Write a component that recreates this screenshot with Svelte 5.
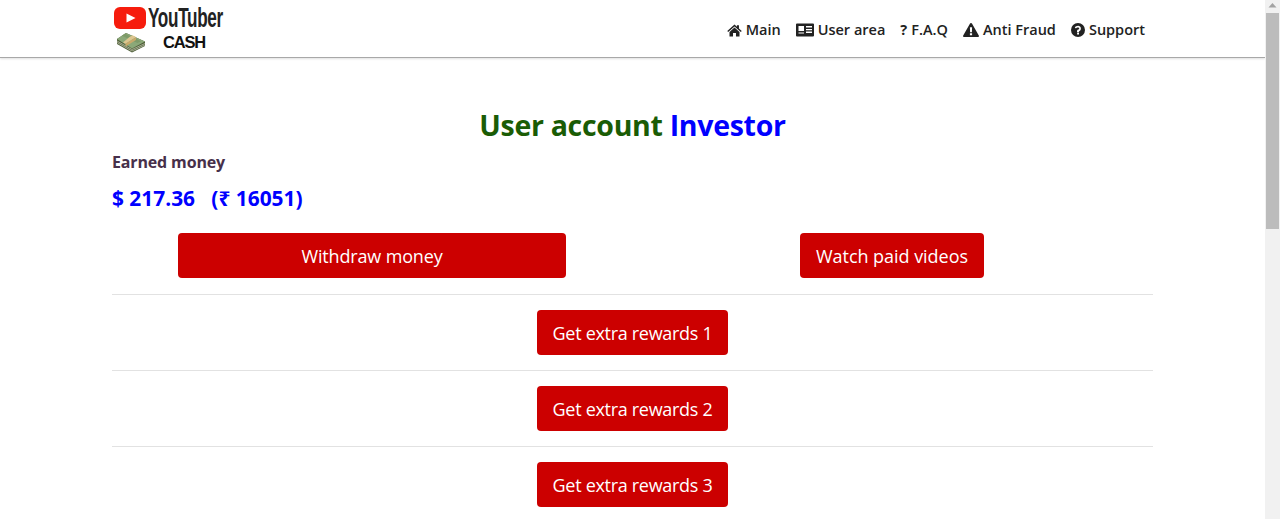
<script>
  const nav = [
    { label: 'Main', icon: 'home' },
    { label: 'User area', icon: 'card' },
    { label: 'F.A.Q', icon: 'q' },
    { label: 'Anti Fraud', icon: 'warn' },
    { label: 'Support', icon: 'help' }
  ];
  const extras = [1, 2, 3];
</script>

<div class="page">
  <header class="topbar">
    <div class="topinner">
      <div class="logo">
        <div class="logo-top">
          <svg class="yt" viewBox="0 0 32 22" width="32" height="22">
            <rect x="0" y="0" width="32" height="22" rx="6" fill="#f61c0d" />
            <path d="M12.5 6.5 L21.5 11 L12.5 15.5 Z" fill="#fff" />
          </svg>
          <span class="yt-word">YouTuber</span>
        </div>
        <div class="logo-bottom">
          <svg class="money" viewBox="0 0 30 21" width="30" height="21">
            <path d="M1 7 L10 1 L29 9.5 L29 14 L16 20.5 L1 12 Z" fill="#4f5f3a" />
            <path d="M1 9 L16 17.5 L29 11.5 M1 10.5 L16 19 L29 13" stroke="#c9ccb4" stroke-width="0.7" fill="none" />
            <path d="M1 7 L10 1 L29 9.5 L16 16.5 Z" fill="#8ba878" />
            <path d="M6 3.7 L9 1.7 L25 9.2 L21.5 11 Z" fill="#7d9a68" />
            <path d="M13.5 5 L16.5 3.2 L20 5 L20 5.2 L9.5 11.8 L7 10.4 Z" fill="#dcc690" />
            <path d="M9.5 11.8 L20 5.2 L20 8 L9.5 14.5 Z" fill="#c9a96a" />
          </svg>
          <span class="cash">CASH</span>
        </div>
      </div>
      <nav class="menu">
        {#each nav as item}
          <a class="link" href="#top">
            {#if item.icon === 'home'}
              <svg viewBox="0 0 16 14" width="15" height="13"><path d="M8 0.6 L10.6 2.9 V1.4 H12.8 V4.8 L15.8 7.5 L14.8 8.6 L8 2.6 L1.2 8.6 L0.2 7.5 Z M8 3.9 L13.4 8.6 V13.4 H9.6 V9.6 H6.4 V13.4 H2.6 V8.6 Z" fill="#222" /></svg>
            {:else if item.icon === 'card'}
              <svg viewBox="0 0 18 14" width="18" height="14"><path fill-rule="evenodd" d="M1 0.5 H17 A1 1 0 0 1 18 1.5 V12.5 A1 1 0 0 1 17 13.5 H1 A1 1 0 0 1 0 12.5 V1.5 A1 1 0 0 1 1 0.5 Z M2.5 3 V8 H8 V3 Z M10 3 V4.4 H16 V3 Z M10 6 V7.2 H16 V6 Z M10 8.6 V10 H16 V8.6 Z M2.5 9.4 V10.6 H8 V9.4 Z" fill="#222" /></svg>
            {:else if item.icon === 'q'}
              <span class="qmark">?</span>
            {:else if item.icon === 'warn'}
              <svg viewBox="0 0 16 14" width="16" height="14"><path fill-rule="evenodd" d="M8 0 C8.5 0 8.9 0.3 9.1 0.7 L15.8 12.4 C16.2 13.1 15.7 14 14.9 14 H1.1 C0.3 14 -0.2 13.1 0.2 12.4 L6.9 0.7 C7.1 0.3 7.5 0 8 0 Z M6.9 4.2 L7.1 9.2 H8.9 L9.1 4.2 Z M6.9 10.2 V12.2 H9.1 V10.2 Z" fill="#222" /></svg>
            {:else}
              <svg viewBox="0 0 14 14" width="14" height="14"><path fill-rule="evenodd" d="M7 0 A7 7 0 1 1 7 14 A7 7 0 1 1 7 0 Z M6.1 9.6 V11.5 H8 V9.6 Z M7.1 2.7 C5.5 2.7 4.5 3.4 3.8 4.5 L5 5.4 C5.5 4.8 5.9 4.4 6.9 4.4 C7.6 4.4 8.2 4.8 8.2 5.4 C8.2 6 7.8 6.2 7.1 6.6 C6.4 7 6 7.5 6 8.4 V8.9 H8 V8.6 C8 8.1 9.9 7.9 9.9 5.4 C9.9 3.7 8.5 2.7 7.1 2.7 Z" fill="#222" /></svg>
            {/if}
            <span>{item.label}</span>
          </a>
        {/each}
      </nav>
    </div>
  </header>

  <main class="content">
    <h1 class="title"><span class="green">User account</span> <span class="blue">Investor</span></h1>
    <h2 class="earned">Earned money</h2>
    <p class="amount">$ 217.36 &nbsp; (₹ 16051)</p>
    <div class="cols">
      <div class="col"><a class="btn wide" href="#top">Withdraw money</a></div>
      <div class="col"><a class="btn watch" href="#top">Watch paid videos</a></div>
    </div>
    {#each extras as n}
      <hr />
      <div class="center"><a class="btn" href="#top">Get extra rewards {n}</a></div>
    {/each}
  </main>

  <div class="scrollbar" aria-hidden="true">
    <svg class="arrow" viewBox="0 0 15 13" width="15" height="13"><path d="M7.5 3 L11.5 7.5 H3.5 Z" fill="#a3a3a3" /></svg>
    <div class="thumb"></div>
  </div>
</div>

<style>
  :global(body) {
    margin: 0;
    background: #fff;
    overflow: hidden;
  }
  .page {
    height: 519px;
    overflow: hidden;
    position: relative;
    font-family: "Open Sans", "Noto Sans", sans-serif;
    width: 1280px;
  }
  .topbar {
    width: 1265px;
    height: 58px;
    box-sizing: border-box;
    background: #fff;
    border-bottom: 1px solid #a8a8a8;
    box-shadow: 0 1px 2px rgba(0, 0, 0, 0.12);
  }
  .topinner {
    width: 1041px;
    margin-left: 112px;
    height: 57px;
    display: flex;
    justify-content: space-between;
  }
  .logo {
    padding: 7px 0 0 2px;
    display: flex;
    flex-direction: column;
  }
  .logo-top {
    display: flex;
    align-items: center;
    height: 22px;
    gap: 2px;
  }
  .yt-word {
    display: block;
    width: 75px;
    font-family: "Liberation Sans", sans-serif;
    font-size: 27px;
    line-height: 22px;
    color: #222;
    font-weight: 700;
    letter-spacing: -0.5px;
    transform: scaleX(0.635);
    transform-origin: left center;
    white-space: nowrap;
  }
  .logo-bottom {
    display: flex;
    align-items: center;
    height: 22px;
    margin-top: 2px;
    gap: 17px;
    padding-left: 2px;
  }
  .cash {
    font-family: "Liberation Sans", sans-serif;
    font-size: 16.5px;
    font-weight: 700;
    color: #111;
    letter-spacing: -1.2px;
  }
  .menu {
    display: flex;
    padding: 20px 8px 0 0;
    gap: 15px;
    height: 20px;
  }
  .link {
    display: flex;
    align-items: center;
    gap: 4px;
    font-size: 14.5px;
    font-weight: 600;
    color: #222;
    text-decoration: none;
    line-height: 20px;
    white-space: nowrap;
  }
  .qmark {
    font-weight: 700;
    font-size: 14.5px;
  }
  .content {
    width: 1041px;
    margin-left: 112px;
  }
  .title {
    margin: 47px 0 0;
    text-align: center;
    font-size: 28.5px;
    line-height: 40px;
    font-weight: 700;
    letter-spacing: -0.3px;
  }
  .green {
    color: #1a5c05;
  }
  .blue {
    color: #0000ff;
  }
  .earned {
    margin: 6px 0 0;
    font-size: 16px;
    line-height: 22px;
    font-weight: 700;
    letter-spacing: -0.15px;
    color: #47304a;
  }
  .amount {
    margin: 11px 0 0;
    font-size: 20.9px;
    line-height: 28px;
    font-weight: 700;
    color: #0000ff;
    white-space: pre;
  }
  .cols {
    display: grid;
    grid-template-columns: 520px 520px;
    margin-top: 21px;
  }
  .col,
  .center {
    display: flex;
    justify-content: center;
  }
  .btn {
    display: block;
    box-sizing: border-box;
    height: 45px;
    line-height: 47px;
    padding: 0 16px;
    background: #cc0000;
    color: #fff;
    font-size: 18px;
    letter-spacing: -0.3px;
    border-radius: 4px;
    text-decoration: none;
    text-align: center;
  }
  .wide {
    width: 388px;
    letter-spacing: -0.15px;
  }
  .watch {
    letter-spacing: -0.04px;
  }
  hr {
    border: 0;
    border-top: 1px solid #e2e2e2;
    margin: 16px 0 15px;
  }
  hr ~ hr {
    margin-top: 15px;
  }
  .scrollbar {
    position: absolute;
    top: 0;
    right: 0;
    width: 15px;
    height: 519px;
    background: #f1f1f1;
  }
  .arrow {
    display: block;
  }
  .thumb {
    position: absolute;
    top: 13px;
    left: 1px;
    width: 13px;
    height: 216px;
    background: #bcbcbc;
  }
</style>
